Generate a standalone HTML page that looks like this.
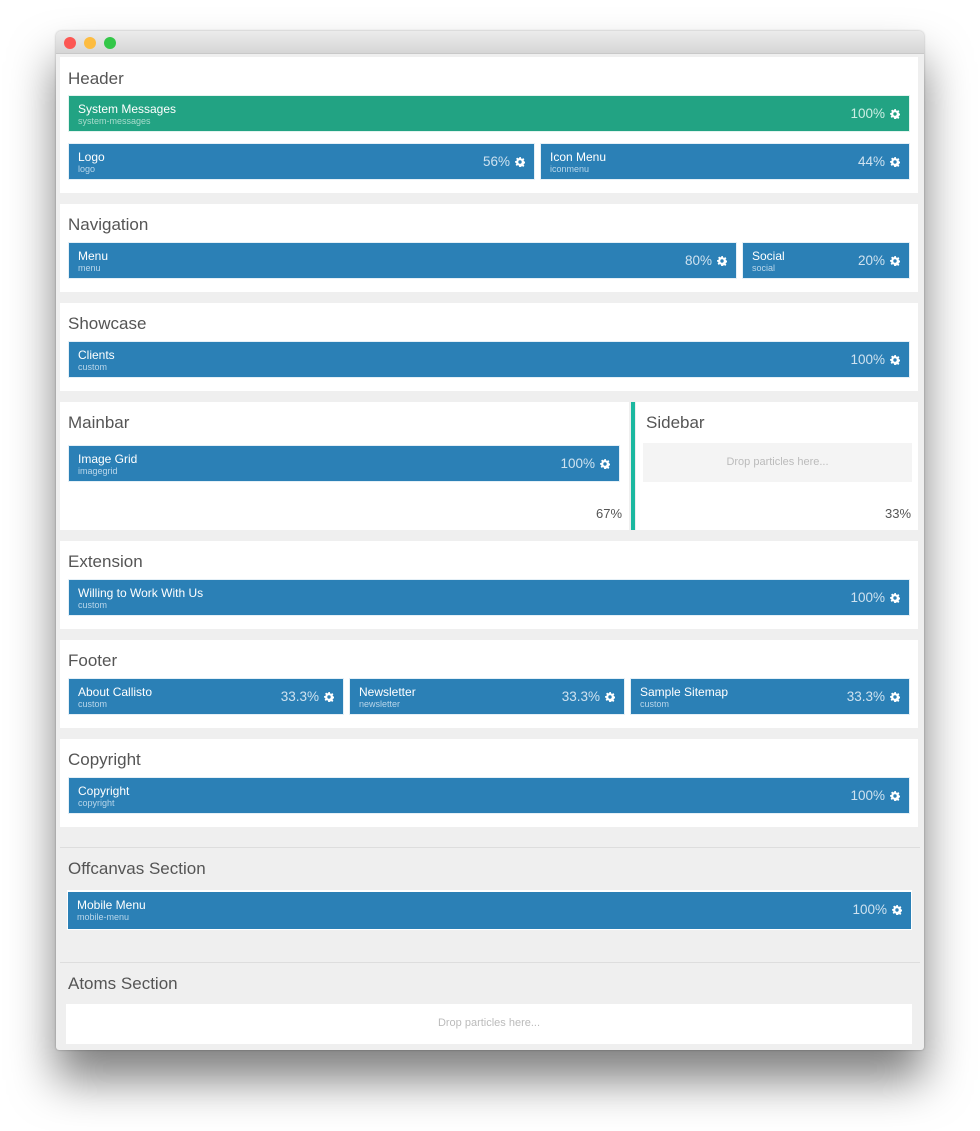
<!DOCTYPE html>
<html><head><meta charset="utf-8"><style>
*{box-sizing:border-box;margin:0;padding:0}
body{width:980px;height:1131px;background:#fff;font-family:"Liberation Sans",sans-serif;position:relative;overflow:hidden}
.win{position:absolute;left:56px;top:31px;width:868px;height:1019px;background:#efefef;border-radius:5px 5px 3px 3px;box-shadow:0 30px 45px rgba(0,0,0,.5),0 0 2px rgba(0,0,0,.3);overflow:hidden}
.tb{position:absolute;left:0;top:0;width:100%;height:23px;background:linear-gradient(#ececec,#d6d6d6);border-bottom:1px solid #c8c8c8}
.dot{position:absolute;top:6px;width:12px;height:12px;border-radius:50%}
.a{position:absolute}
.sec{position:absolute;background:#fff}
.t{position:absolute;font-size:17px;color:#555}
.bar{position:absolute;height:37px;background:#2b80b6;color:#fff;border:1px solid #e5f0f7}
.bar .n{position:absolute;left:9px;top:6px;font-size:12px}
.bar .s{position:absolute;left:9px;top:20px;font-size:9px;color:#b9d6ea}
.bar .p{position:absolute;right:24px;top:10px;font-size:13.5px;color:#cfe2f0}
.bar .g{position:absolute;right:9px;top:13px;width:10px;height:10px}
.pct{position:absolute;font-size:13px;color:#555}
.drop{position:absolute;font-size:11px;color:#bbb;text-align:center}
.hr{position:absolute;left:4px;width:860px;height:1px;background:#ddd}
</style></head><body>
<svg width="0" height="0" style="position:absolute"><defs><symbol id="gear" viewBox="0 0 10 10"><path fill="#fff" d="M4.2 0h1.6l.3 1.4 1 .5 1.2-.8 1.1 1.1-.8 1.2.5 1 1.4.3v1.6l-1.4.3-.5 1 .8 1.2-1.1 1.1-1.2-.8-1 .5L5.8 10H4.2l-.3-1.4-1-.5-1.2.8-1.1-1.1.8-1.2-.5-1L0 5.8V4.2l1.4-.3.5-1-.8-1.2 1.1-1.1 1.2.8 1-.5zM5 3.3A1.7 1.7 0 1 0 5 6.7 1.7 1.7 0 1 0 5 3.3z"/></symbol></defs></svg>
<div class="win">
<div class="tb"><div class="dot" style="left:8px;background:#fc5753"></div><div class="dot" style="left:28px;background:#fdbc40"></div><div class="dot" style="left:48px;background:#33c748"></div></div>

<div class="sec" style="left:4px;top:26px;width:858px;height:136px"></div>
<div class="t" style="left:12px;top:38px">Header</div>
<div class="bar" style="left:12px;top:64px;width:842px;background:#22a383;border-color:#e4f4ef"><div class="n">System Messages</div><div class="s" style="color:#a9dccd">system-messages</div><div class="p" style="color:#cdeee4">100%</div><svg class="g"><use href="#gear"/></svg></div>
<div class="bar" style="left:12px;top:112px;width:467px"><div class="n">Logo</div><div class="s">logo</div><div class="p">56%</div><svg class="g"><use href="#gear"/></svg></div>
<div class="bar" style="left:484px;top:112px;width:370px"><div class="n">Icon Menu</div><div class="s">iconmenu</div><div class="p">44%</div><svg class="g"><use href="#gear"/></svg></div>

<div class="sec" style="left:4px;top:173px;width:858px;height:88px"></div>
<div class="t" style="left:12px;top:184px">Navigation</div>
<div class="bar" style="left:12px;top:211px;width:669px"><div class="n">Menu</div><div class="s">menu</div><div class="p">80%</div><svg class="g"><use href="#gear"/></svg></div>
<div class="bar" style="left:686px;top:211px;width:168px"><div class="n">Social</div><div class="s">social</div><div class="p">20%</div><svg class="g"><use href="#gear"/></svg></div>

<div class="sec" style="left:4px;top:272px;width:858px;height:88px"></div>
<div class="t" style="left:12px;top:283px">Showcase</div>
<div class="bar" style="left:12px;top:310px;width:842px"><div class="n">Clients</div><div class="s">custom</div><div class="p">100%</div><svg class="g"><use href="#gear"/></svg></div>

<div class="sec" style="left:4px;top:371px;width:569px;height:128px"></div>
<div class="a" style="left:575px;top:371px;width:4px;height:128px;background:#1bb8a0"></div>
<div class="sec" style="left:580px;top:371px;width:282px;height:128px"></div>
<div class="t" style="left:12px;top:382px">Mainbar</div>
<div class="bar" style="left:12px;top:414px;width:552px"><div class="n">Image Grid</div><div class="s">imagegrid</div><div class="p">100%</div><svg class="g"><use href="#gear"/></svg></div>
<div class="pct" style="left:540px;top:475px">67%</div>
<div class="t" style="left:590px;top:382px">Sidebar</div>
<div class="a" style="left:587px;top:412px;width:269px;height:39px;background:#f4f4f4"></div>
<div class="drop" style="left:587px;top:425px;width:269px">Drop particles here...</div>
<div class="pct" style="left:829px;top:475px">33%</div>

<div class="sec" style="left:4px;top:510px;width:858px;height:88px"></div>
<div class="t" style="left:12px;top:521px">Extension</div>
<div class="bar" style="left:12px;top:548px;width:842px"><div class="n">Willing to Work With Us</div><div class="s">custom</div><div class="p">100%</div><svg class="g"><use href="#gear"/></svg></div>

<div class="sec" style="left:4px;top:609px;width:858px;height:88px"></div>
<div class="t" style="left:12px;top:620px">Footer</div>
<div class="bar" style="left:12px;top:647px;width:276px"><div class="n">About Callisto</div><div class="s">custom</div><div class="p">33.3%</div><svg class="g"><use href="#gear"/></svg></div>
<div class="bar" style="left:293px;top:647px;width:276px"><div class="n">Newsletter</div><div class="s">newsletter</div><div class="p">33.3%</div><svg class="g"><use href="#gear"/></svg></div>
<div class="bar" style="left:574px;top:647px;width:280px"><div class="n">Sample Sitemap</div><div class="s">custom</div><div class="p">33.3%</div><svg class="g"><use href="#gear"/></svg></div>

<div class="sec" style="left:4px;top:708px;width:858px;height:88px"></div>
<div class="t" style="left:12px;top:719px">Copyright</div>
<div class="bar" style="left:12px;top:746px;width:842px"><div class="n">Copyright</div><div class="s">copyright</div><div class="p">100%</div><svg class="g"><use href="#gear"/></svg></div>

<div class="hr" style="top:816px"></div>
<div class="t" style="left:12px;top:828px">Offcanvas Section</div>
<div class="a" style="left:11px;top:859px;width:845px;height:40px;background:#fff"></div>
<div class="bar" style="left:12px;top:860px;width:843px;height:38px;border:none;border-top:1px solid #fff"><div class="n">Mobile Menu</div><div class="s">mobile-menu</div><div class="p">100%</div><svg class="g"><use href="#gear"/></svg></div>

<div class="hr" style="top:931px"></div>
<div class="t" style="left:12px;top:943px">Atoms Section</div>
<div class="a" style="left:10px;top:973px;width:846px;height:40px;background:#fff"></div>
<div class="drop" style="left:10px;top:986px;width:846px">Drop particles here...</div>
</div>
</body></html>
